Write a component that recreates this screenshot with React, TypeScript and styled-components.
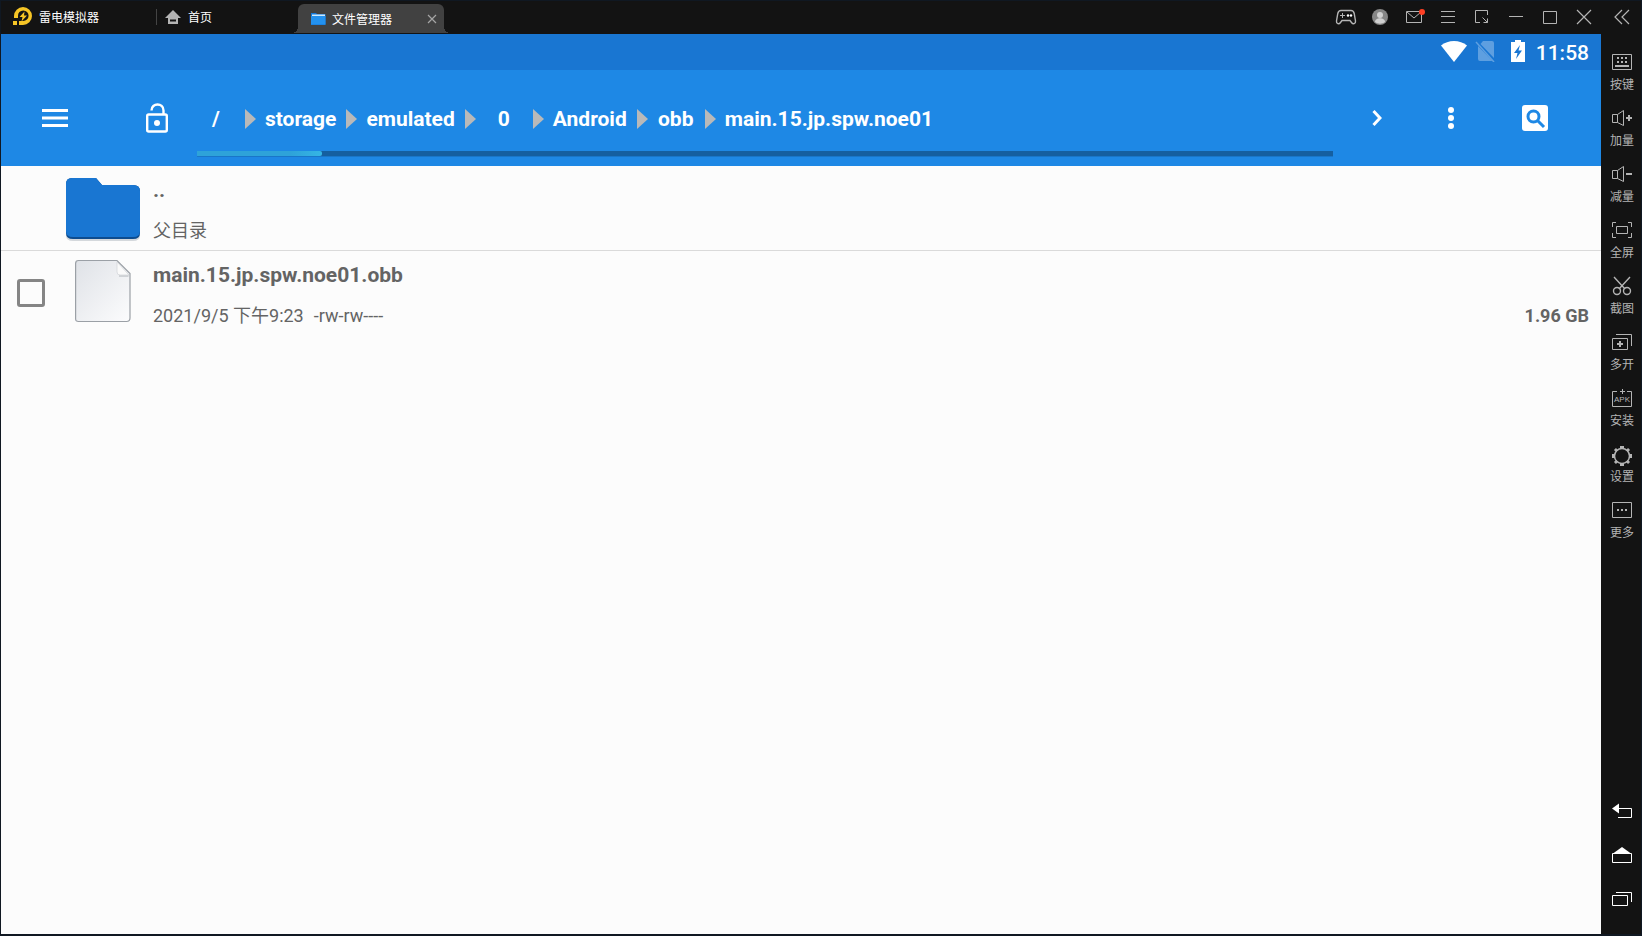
import React, { useState } from "react";
import styled, { createGlobalStyle } from "styled-components";

const GlobalStyle = createGlobalStyle`
  *, *::before, *::after { box-sizing: border-box; }
  body { margin: 0; background: #131313; }
  button { border: 0; margin: 0; padding: 0; background: none; color: inherit; font: inherit; cursor: pointer; }
  h1, p, ul, ol { margin: 0; padding: 0; font: inherit; }
  ul, ol { list-style: none; }
  svg { display: block; flex: none; }
`;

const chromeFont = `"Noto Sans CJK SC", "Liberation Sans", sans-serif`;
const androidFont = `Roboto, "Noto Sans CJK SC", sans-serif`;

const Window = styled.div`
  display: flex;
  min-height: 100vh;
  border: 1px solid #101822;
  border-bottom-width: 2px;
  background: #131313;
  font-family: ${chromeFont};
  font-size: 12px;
  line-height: 16px;
  color: #fff;
`;

const Main = styled.div`
  flex: 1;
  min-width: 0;
  display: flex;
  flex-direction: column;
`;

const TitleBar = styled.header`
  display: flex;
  align-items: center;
  height: 33px;
  padding-bottom: 1px;
`;

const Brand = styled.div`
  display: flex;
  align-items: center;
  gap: 6px;
  width: 155px;
  padding-left: 11px;
`;

const HomeTab = styled.button`
  display: flex;
  align-items: center;
  gap: 7px;
  width: 142px;
  height: 16px;
  padding-left: 8px;
  border-left: 1px solid #444;
`;

const ActiveTab = styled.div`
  position: relative;
  align-self: flex-end;
  display: flex;
  align-items: center;
  width: 146px;
  height: 29px;
  padding: 0 2px 0 13px;
  border-radius: 6px 6px 0 0;
  background: #414141;
  &::before, &::after {
    content: "";
    position: absolute;
    bottom: 0;
    width: 6px;
    height: 6px;
  }
  &::before { right: 100%; background: radial-gradient(circle at 0 0, transparent 6px, #414141 6px); }
  &::after { left: 100%; background: radial-gradient(circle at 100% 0, transparent 6px, #414141 6px); }
`;

const TabName = styled.span`
  flex: 1;
  margin-left: 6px;
`;

const WindowControls = styled.div`
  display: flex;
  margin-left: auto;
`;

const ControlButton = styled.button`
  display: grid;
  place-items: center;
  width: 34px;
  height: 32px;
`;

const StatusBar = styled.div`
  display: flex;
  align-items: flex-end;
  justify-content: flex-end;
  height: 36px;
  padding-right: 12px;
  background: #1976d2;
  font: 500 21px/34px ${androidFont};
`;

const StatusIcons = styled.div`
  display: flex;
  gap: 6px;
  padding: 0 5px 8px 0;
`;

const Toolbar = styled.nav`
  display: flex;
  align-items: center;
  height: 96px;
  padding-right: 12px;
  background: #1e88e5;
`;

const LeadingActions = styled.div`
  display: flex;
  justify-content: space-between;
  width: 196px;
`;

const ToolbarButton = styled.button<{ $width: number }>`
  display: grid;
  place-items: center;
  width: ${(p) => p.$width}px;
  height: 96px;
`;

const PathArea = styled.div`
  flex: 1;
  min-width: 0;
  display: flex;
  flex-direction: column;
  padding-top: 8px;
`;

const Crumbs = styled.ol`
  display: flex;
  align-items: center;
  height: 64px;
  overflow: hidden;
  font: 700 21px/32px ${androidFont};
`;

const CrumbItem = styled.li`
  display: flex;
  align-items: center;
  gap: 9px;
  margin-right: 10px;
`;

const CrumbButton = styled.button`
  min-width: 38px;
  text-align: center;
  white-space: nowrap;
`;

const UsageTrack = styled.div`
  height: 6px;
  background: #155fa0;
  border-bottom: 1px solid #1976c9;
`;

const UsageFill = styled.div`
  height: 5px;
  width: 11%;
  border-radius: 0 2px 2px 0;
  background: linear-gradient(90deg, #2ea3d9 75%, #35b5e5);
`;

const FileList = styled.ul`
  flex: 1;
  background: #fcfcfc;
  color: #646464;
  font-family: ${androidFont};
`;

const FileRow = styled.li<{ $divided?: boolean }>`
  display: flex;
  height: ${(p) => (p.$divided ? 85 : 84)}px;
  padding: 0 12px 0 16px;
  border-bottom: ${(p) => (p.$divided ? "1px solid #dadada" : "0")};
`;

const CheckSlot = styled.div`
  width: 48px;
  padding-top: 28px;
`;

const CheckBox = styled.input`
  appearance: none;
  display: block;
  width: 28px;
  height: 28px;
  margin: 0;
  border: 3px solid #858585;
  border-radius: 3px;
  &:checked { background: #1976d2; }
`;

const FileIcon = styled.div`
  display: flex;
  justify-content: center;
  width: 76px;
  margin-right: 12px;
  padding-top: 8px;
`;

const FileText = styled.label`
  flex: 1;
  min-width: 0;
`;

const FileName = styled.span`
  display: block;
  font-size: 21px;
  font-weight: 700;
  line-height: 48px;
`;

const FileMeta = styled.span`
  display: flex;
  gap: 10px;
  font-size: 18px;
  line-height: 34px;
`;

const FileSize = styled.span`
  margin-left: auto;
  font-weight: 700;
`;

const SideBar = styled.aside`
  display: flex;
  flex-direction: column;
  align-items: center;
  width: 40px;
  padding: 0 0 13px 2px;
  color: #b4b4b4;
`;

const ToolList = styled.ul`
  margin-top: 13px;
`;

const ToolButton = styled.button`
  display: flex;
  flex-direction: column;
  align-items: center;
  gap: 2px;
  width: 38px;
  height: 56px;
  padding-top: 4px;
`;

const NavKeys = styled.div`
  margin-top: auto;
  color: #fff;
`;

const NavKey = styled.button`
  display: grid;
  place-items: center;
  width: 38px;
  height: 44px;
`;

type IconProps = { w?: number; h?: number; color?: string; children: React.ReactNode };

const Icon = ({ w = 24, h = 24, color = "currentColor", children }: IconProps) => (
  <svg width={w} height={h} viewBox={`0 0 ${w} ${h}`} fill="none" stroke={color} aria-hidden="true">
    {children}
  </svg>
);

const LogoIcon = () => (
  <Icon w={21} h={20}>
    <g stroke="none" fill="#f6c526">
      <path d="M2 11V9a9 9 0 1 1 9 9H9v-4h2a5.300 5.300 0 1 0-5-5v2z" />
      <path d="M1 14h4v4H1zM7 14h4v4H7z" />
      <path d="M12.500 4.500L7.500 10h3l-1 4.500 5.500-6h-3z" />
    </g>
  </Icon>
);

const HomeIcon = () => (
  <Icon w={16} h={16}>
    <path d="M8 1L0 9h3v6h10V9h3z" fill="#b4b4b4" stroke="none" />
    <path d="M5 11.500h6" stroke="#131313" strokeWidth="2" />
  </Icon>
);

const SmallFolderIcon = () => (
  <Icon w={15} h={13}>
    <g stroke="none">
      <path d="M0 1h5l1 1h8.500v11H0z" fill="#1277d8" />
      <path d="M1 2.500h13V5H1z" fill="#cfe9fb" />
      <path d="M0 4h14.500v8.500H0z" fill="#2391ee" />
    </g>
  </Icon>
);

const CloseSmallIcon = () => (
  <Icon w={20} h={20} color="#a5a5a5">
    <path d="M6 6l8 8M14 6l-8 8" strokeWidth="1.200" />
  </Icon>
);

const controls: { label: string; icon: React.ReactNode }[] = [
  {
    label: "游戏手柄",
    icon: (
      <>
        <path d="M7 5.500h10c2 0 2.800 1 3.200 3l1.300 7.500c.4 3-2.500 3.500-4 1.500l-1.500-2H8l-1.500 2c-1.500 2-4.400 1.500-4-1.500L3.800 8.500c.4-2 1.200-3 3.200-3z" strokeWidth="1.400" />
        <path d="M8.500 8v5M6 10.500h5" />
        <g fill="currentColor" stroke="none">
          <circle cx="14" cy="10.500" r="1.200" />
          <circle cx="17" cy="10.500" r="1.200" />
        </g>
      </>
    ),
  },
  {
    label: "账户",
    icon: (
      <g stroke="none">
        <circle cx="12" cy="12" r="8" fill="#868686" />
        <circle cx="12" cy="10" r="3" fill="#d0d0d0" />
        <path d="M7 17c0-5 10-5 10 0-3 2.300-7 2.300-10 0z" fill="#d0d0d0" />
      </g>
    ),
  },
  {
    label: "消息",
    icon: (
      <>
        <path d="M4.500 6.500h15v11h-15zM5 7l7 6 7-6" />
        <circle cx="20" cy="7" r="3" fill="#ff3f24" stroke="none" />
      </>
    ),
  },
  { label: "菜单", icon: <path d="M5 6.500h14M5 11.500h14M5 17.500h14" /> },
  { label: "窗口缩放", icon: <path d="M10 17.500H5.500v-12h12V10M12.500 12.500l5 5M17.500 13.500v4h-4" /> },
  { label: "最小化", icon: <path d="M5 11.500h14" /> },
  { label: "最大化", icon: <path d="M5.500 6.500h13v12h-13z" /> },
  { label: "关闭", icon: <path d="M5 5l14 14M19 5L5 19" strokeWidth="1.200" /> },
];

const tools: { label: string; icon: React.ReactNode }[] = [
  {
    label: "按键",
    icon: (
      <>
        <path d="M2.500 4.500h19v15h-19z" />
        <path d="M7 8h10.500M7 12h10.500" strokeWidth="2" strokeDasharray="2 2" />
        <path d="M5 16h14" strokeWidth="2" />
      </>
    ),
  },
  {
    label: "加量",
    icon: (
      <>
        <path d="M2.500 8.500h5v8h-5zM7.500 8.500l6-4v15l-6-3" />
        <path d="M16 12h6M19 9v6" strokeWidth="2" />
      </>
    ),
  },
  {
    label: "减量",
    icon: (
      <>
        <path d="M2.500 8.500h5v8h-5zM7.500 8.500l6-4v15l-6-3" />
        <path d="M16 12h6" strokeWidth="2" />
      </>
    ),
  },
  {
    label: "全屏",
    icon: <path d="M6 4.500H2.500V9M18 4.500h3.500V9M2.500 15v4.500H6M21.500 15v4.500H18M6.500 8.500h11v7h-11z" />,
  },
  {
    label: "截图",
    icon: (
      <>
        <path d="M4 3l11 12M20 3L9 15" strokeWidth="1.400" />
        <circle cx="7" cy="17" r="3.500" strokeWidth="1.400" />
        <circle cx="17" cy="17" r="3.500" strokeWidth="1.400" />
      </>
    ),
  },
  {
    label: "多开",
    icon: (
      <>
        <path d="M6 4.500h15.500V16M2.500 8.500h15v11h-15z" />
        <path d="M7 14h6M10 11v6" strokeWidth="2" />
      </>
    ),
  },
  {
    label: "安装",
    icon: (
      <>
        <path d="M7 5.500H2.500v15h19v-15H17M12.500 3v5M10 5.500h5" />
        <text x="12" y="16" textAnchor="middle" fontFamily="Liberation Sans, sans-serif" fontSize="8" fill="currentColor" stroke="none">
          APK
        </text>
      </>
    ),
  },
  {
    label: "设置",
    icon: (
      <>
        <circle cx="12" cy="14" r="7.500" strokeWidth="1.500" />
        <g strokeWidth="3">
          <path d="M10 5.500h4M10 22.500h4M3.500 12v4M20.500 12v4" />
          <path d="M5 9l2-2M17 7l2 2M5 19l2 2M17 21l2-2" />
        </g>
      </>
    ),
  },
  {
    label: "更多",
    icon: (
      <>
        <path d="M2.500 4.500h19v15h-19z" />
        <path d="M7 12h10" strokeWidth="2" strokeDasharray="2 2" />
      </>
    ),
  },
];

const navKeys: { label: string; icon: React.ReactNode }[] = [
  {
    label: "返回",
    icon: (
      <>
        <path d="M2 9.500l7-5v10z" fill="#fff" stroke="none" />
        <path d="M8 9.500h13.500v9H8" />
      </>
    ),
  },
  {
    label: "主页",
    icon: (
      <>
        <path d="M12 4l9 6.500H3z" fill="#fff" stroke="none" />
        <path d="M2.500 10.500h19v9h-19z" />
      </>
    ),
  },
  { label: "最近任务", icon: <path d="M6 5.500h15.500V15M2.500 8.500h15v10h-15z" /> },
];

const WifiIcon = () => (
  <Icon w={26} h={22}>
    <path d="M13 22L0 5.500C7-.5 19-.5 26 5.500z" fill="#fff" stroke="none" />
  </Icon>
);

const NoSimIcon = () => (
  <Icon w={26} h={22}>
    <path d="M10 1h9q2 0 2 2v15L7.500 4zM5 6l14.500 15H7q-2 0-2-2z" fill="#5e9fe0" stroke="none" />
    <path d="M3 2l18 20" stroke="#5e9fe0" strokeWidth="1.500" />
  </Icon>
);

const BatteryIcon = () => (
  <Icon w={26} h={22}>
    <path d="M6 2h4V0h6v2h4v20H6z" fill="#fff" stroke="none" />
    <path d="M15 5l-6 8h3.500L11 19l6-8.500h-3.500z" fill="#1976d2" stroke="none" />
  </Icon>
);

const MenuIcon = () => (
  <Icon w={26} h={20}>
    <path d="M0 2.500h26M0 10h26M0 17.500h26" stroke="#fff" strokeWidth="2.800" />
  </Icon>
);

const LockIcon = () => (
  <Icon w={22} h={30} color="#fff">
    <rect x="1.200" y="11.500" width="19.600" height="17" rx="1.500" strokeWidth="2.400" />
    <path d="M5.500 7.500c0-8 12-8 12 0v4" strokeWidth="2.400" />
    <circle cx="11" cy="20" r="3" fill="#fff" stroke="none" />
  </Icon>
);

const CrumbArrow = () => (
  <Icon w={11} h={20}>
    <path d="M0 0l11 10L0 20z" fill="#b9b9b9" stroke="none" />
  </Icon>
);

const ChevronIcon = () => (
  <Icon w={10} h={18} color="#fff">
    <path d="M1.500 2l6.500 7-6.500 7" strokeWidth="3" />
  </Icon>
);

const DotsIcon = () => (
  <Icon w={8} h={24}>
    <g fill="#fff" stroke="none">
      <circle cx="4" cy="4" r="3" />
      <circle cx="4" cy="12" r="3" />
      <circle cx="4" cy="20" r="3" />
    </g>
  </Icon>
);

const SearchIcon = () => (
  <Icon w={26} h={26} color="#1e88e5">
    <rect width="26" height="26" rx="3" fill="#fff" stroke="none" />
    <circle cx="11.500" cy="11.500" r="5.500" strokeWidth="3" />
    <path d="M15 15l7 7" strokeWidth="3" />
  </Icon>
);

const FolderIcon = () => (
  <Icon w={76} h={72}>
    <g stroke="none">
      <path d="M7 6h23l7 7h31q7 0 7 6v42q0 6-7 6H8q-7 0-7-6V12q0-6 6-6z" fill="#d4d8dc" />
      <path d="M7 4h24l6 7h31q7 0 7 6v42q0 6-7 6H8q-7 0-7-6V10q0-6 6-6z" fill="#0d4c8f" />
      <path d="M7 4h24l6 7h31q7 0 7 6v40q0 6-7 6H8q-7 0-7-6V10q0-6 6-6z" fill="#1976d2" />
    </g>
  </Icon>
);

const DocumentIcon = () => (
  <Icon w={56} h={66}>
    <defs>
      <linearGradient id="paper" x1="0" y1="0" x2="1" y2="1">
        <stop offset="0" stopColor="#dfe2e7" />
        <stop offset="1" stopColor="#fcfcfd" />
      </linearGradient>
    </defs>
    <path d="M3.500 1.500H42L55 14.500V59q0 3.500-3.500 3.500h-48Q.6 62.500.6 60V4.500q0-3 2.900-3z" fill="url(#paper)" stroke="#9ba0a6" strokeWidth="1.200" />
    <path d="M44 17h9.500" stroke="#cfd2d6" strokeWidth="2" />
    <path d="M42 3v10q0 3 3 3h9z" fill="#fafafa" stroke="#d4d7db" strokeWidth=".8" />
  </Icon>
);

const crumbs = ["/", "storage", "emulated", "0", "Android", "obb", "main.15.jp.spw.noe01"];

export default function App() {
  const [checked, setChecked] = useState(false);
  return (
    <Window>
      <GlobalStyle />
      <Main>
        <TitleBar>
          <Brand>
            <LogoIcon />
            <h1>雷电模拟器</h1>
          </Brand>
          <HomeTab>
            <HomeIcon />
            首页
          </HomeTab>
          <ActiveTab>
            <SmallFolderIcon />
            <TabName>文件管理器</TabName>
            <button aria-label="关闭标签">
              <CloseSmallIcon />
            </button>
          </ActiveTab>
          <WindowControls>
            {controls.map((c) => (
              <ControlButton key={c.label} aria-label={c.label}>
                <Icon color="#b4b4b4">{c.icon}</Icon>
              </ControlButton>
            ))}
          </WindowControls>
        </TitleBar>

        <StatusBar>
          <StatusIcons>
            <WifiIcon />
            <NoSimIcon />
            <BatteryIcon />
          </StatusIcons>
          <time>11:58</time>
        </StatusBar>

        <Toolbar aria-label="路径">
          <LeadingActions>
            <ToolbarButton $width={107} aria-label="导航菜单">
              <MenuIcon />
            </ToolbarButton>
            <ToolbarButton $width={80} aria-label="解锁">
              <LockIcon />
            </ToolbarButton>
          </LeadingActions>
          <PathArea>
            <Crumbs>
              {crumbs.map((name, i) => (
                <CrumbItem key={name}>
                  {i > 0 && <CrumbArrow />}
                  <CrumbButton>{name}</CrumbButton>
                </CrumbItem>
              ))}
            </Crumbs>
            <UsageTrack>
              <UsageFill />
            </UsageTrack>
          </PathArea>
          <ToolbarButton $width={88} aria-label="前进">
            <ChevronIcon />
          </ToolbarButton>
          <ToolbarButton $width={60} aria-label="更多选项">
            <DotsIcon />
          </ToolbarButton>
          <ToolbarButton $width={108} aria-label="搜索">
            <SearchIcon />
          </ToolbarButton>
        </Toolbar>

        <FileList>
          <FileRow $divided>
            <CheckSlot />
            <FileIcon>
              <FolderIcon />
            </FileIcon>
            <FileText as="div">
              <FileName>..</FileName>
              <FileMeta>父目录</FileMeta>
            </FileText>
          </FileRow>
          <FileRow>
            <CheckSlot>
              <CheckBox id="file-obb" type="checkbox" checked={checked} onChange={(e) => setChecked(e.target.checked)} />
            </CheckSlot>
            <FileIcon>
              <DocumentIcon />
            </FileIcon>
            <FileText htmlFor="file-obb">
              <FileName>main.15.jp.spw.noe01.obb</FileName>
              <FileMeta>
                <span>2021/9/5 下午9:23</span>
                <span>-rw-rw----</span>
                <FileSize>1.96 GB</FileSize>
              </FileMeta>
            </FileText>
          </FileRow>
        </FileList>
      </Main>

      <SideBar>
        <ControlButton aria-label="收起侧栏">
          <Icon color="#b4b4b4">
            <path d="M12 5l-7 7 7 7M19 5l-7 7 7 7" strokeWidth="1.200" />
          </Icon>
        </ControlButton>
        <ToolList>
          {tools.map((t) => (
            <li key={t.label}>
              <ToolButton>
                <Icon>{t.icon}</Icon>
                {t.label}
              </ToolButton>
            </li>
          ))}
        </ToolList>
        <NavKeys>
          {navKeys.map((k) => (
            <NavKey key={k.label} aria-label={k.label}>
              <Icon>{k.icon}</Icon>
            </NavKey>
          ))}
        </NavKeys>
      </SideBar>
    </Window>
  );
}
